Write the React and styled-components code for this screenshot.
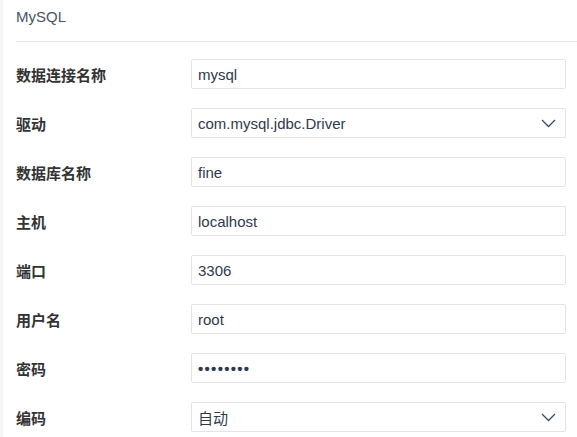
import React from "react";
import styled, { createGlobalStyle } from "styled-components";

const GlobalStyle = createGlobalStyle`
  html, body {
    margin: 0;
    padding: 0;
    background: #ffffff;
    font-family: "Liberation Sans", "Noto Sans CJK SC", sans-serif;
  }
`;

const Page = styled.div`
  display: flex;
  height: 437px;
  overflow: hidden;
`;

const Strip = styled.div`
  width: 3px;
  flex-shrink: 0;
  background: #f4f6f8;
`;

const Panel = styled.div`
  flex: 1;
  padding-left: 13px;
`;

const Header = styled.div`
  height: 42px;
  border-bottom: 1px solid #e6e6e6;
  display: flex;
  align-items: center;
  padding-bottom: 9px;
  box-sizing: border-box;
  font-size: 15px;
  color: #4a5466;
`;

const Form = styled.div`
  display: flex;
  flex-direction: column;
  gap: 19px;
  padding: 17px 11px 0 0;
`;

const Row = styled.div`
  display: flex;
  align-items: center;
`;

const Label = styled.div`
  width: 175px;
  flex-shrink: 0;
  font-size: 15px;
  font-weight: bold;
  color: #333333;
`;

const Field = styled.div`
  flex: 1;
  height: 30px;
  box-sizing: border-box;
  border: 1px solid #e4e4e4;
  border-radius: 2px;
  display: flex;
  align-items: center;
  justify-content: space-between;
  padding: 0 9px 0 6px;
  font-size: 15px;
  letter-spacing: ${(p) => (p.$secret ? "1.3px" : "0")};
  font-weight: ${(p) => (p.$secret ? "bold" : "normal")};
  color: #2f3a4d;
`;

const Chevron = () => (
  <svg width="15" height="9" viewBox="0 0 15 9" fill="none">
    <path d="M1 1l6.5 6.5L14 1" stroke="#3b4a66" strokeWidth="1.3" />
  </svg>
);

const fields = [
  { label: "数据连接名称", value: "mysql" },
  { label: "驱动", value: "com.mysql.jdbc.Driver", select: true },
  { label: "数据库名称", value: "fine" },
  { label: "主机", value: "localhost" },
  { label: "端口", value: "3306" },
  { label: "用户名", value: "root" },
  { label: "密码", value: "••••••••", secret: true },
  { label: "编码", value: "自动", select: true },
];

const App = () => {
  return (
    <Page>
      <GlobalStyle />
      <Strip />
      <Panel>
        <Header>MySQL</Header>
        <Form>
          {fields.map((f) => (
            <Row key={f.label}>
              <Label>{f.label}</Label>
              <Field $secret={f.secret}>
                <span>{f.value}</span>
                {f.select && <Chevron />}
              </Field>
            </Row>
          ))}
        </Form>
      </Panel>
    </Page>
  );
};

export default App;
